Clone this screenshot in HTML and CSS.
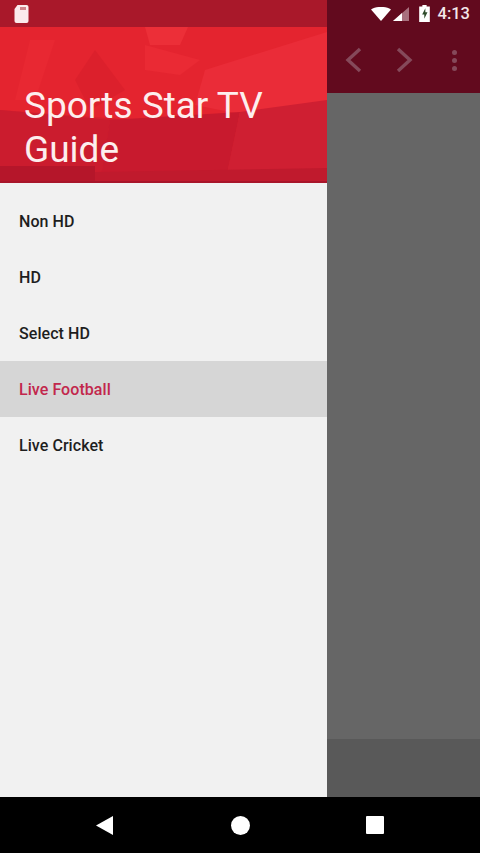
FILE: index.html
```html
<!DOCTYPE html>
<html lang="en">
<head>
    <meta charset="UTF-8">
    <title>Sports Star TV Guide</title>
    <link rel="stylesheet" href="styles.css">
</head>
<body>
<div class="screen">
    <div class="main">
        <div class="drawer">
            <div class="drawer-top">
                <svg class="texture" viewBox="0 0 327 183" preserveAspectRatio="none">
                    <rect width="327" height="183" fill="#d5202f"/>
                    <polygon points="0,0 327,0 327,110 200,125 0,110" fill="#e4242f"/>
                    <polygon points="145,27 188,27 180,45 150,45" fill="#ec2f38"/>
                    <polygon points="30,40 55,40 35,100 15,100" fill="#e82832"/>
                    <polygon points="95,50 125,90 90,110 75,80" fill="#dc202c"/>
                    <polygon points="205,70 327,32 327,105 270,120 195,105" fill="#ea2c38"/>
                    <polygon points="145,45 200,60 180,75 145,70" fill="#ea2a34"/>
                    <polygon points="0,110 110,120 100,183 0,183" fill="#cb1c2e"/>
                    <polygon points="110,120 240,112 225,183 100,183" fill="#c81a2e"/>
                    <polygon points="240,112 327,100 327,183 225,183" fill="#cf1f32"/>
                    <polygon points="0,166 95,166 95,183 0,183" fill="#b5162a"/>
                    <polygon points="95,172 327,168 327,183 95,183" fill="#c01a2d"/>
                    <rect y="181" width="327" height="2" fill="#a8152a"/>
                </svg>
                <div class="status-left">
                    <svg class="sd-icon" viewBox="0 0 14 18">
                        <path d="M3 0h9a2 2 0 0 1 2 2v14a2 2 0 0 1-2 2H2a2 2 0 0 1-2-2V4z" fill="#fbeaec"/>
                        <path d="M6 2h1v3H6zM8 2h1v3H8zM10 2h1v3h-1z" fill="#a81a2b"/>
                    </svg>
                </div>
                <div class="drawer-title">Sports Star TV Guide</div>
            </div>
            <ul class="menu">
                <li class="menu-item">Non HD</li>
                <li class="menu-item">HD</li>
                <li class="menu-item">Select HD</li>
                <li class="menu-item active">Live Football</li>
                <li class="menu-item">Live Cricket</li>
            </ul>
        </div>
        <div class="behind">
            <div class="appbar">
                <div class="status-right">
                    <svg class="wifi" viewBox="0 0 20 14"><path d="M0 2.500C5.500-1 14.500-1 20 2.500L10 14z" fill="#fff"/></svg>
                    <svg class="signal" viewBox="0 0 16 14">
                        <path d="M16 0v14H0z" fill="#a8707e"/>
                        <path d="M9 6v8H0z" fill="#fff"/>
                    </svg>
                    <svg class="battery" viewBox="0 0 10 16">
                        <path d="M3 0h4v1.500h3V16H0V1.500h3z" fill="#fff"/>
                        <path d="M5.800 3L2.800 9h2v4l3-6.200h-2z" fill="#2d4a2a"/>
                    </svg>
                    <span class="clock">4:13</span>
                </div>
                <div class="toolbar">
                    <svg class="chevron" viewBox="0 0 18 26"><path d="M15 2L3 13l12 11" fill="none" stroke="#85495a" stroke-width="3.400"/></svg>
                    <svg class="chevron next" viewBox="0 0 18 26"><path d="M3 2l12 11L3 24" fill="none" stroke="#85495a" stroke-width="3.400"/></svg>
                    <div class="dots"><span></span><span></span><span></span></div>
                </div>
            </div>
            <div class="content"></div>
            <div class="footer"></div>
        </div>
    </div>
    <div class="navbar">
        <svg class="nav-back" viewBox="0 0 17 19"><path d="M17 0v19L0 9.500z" fill="#fff"/></svg>
        <div class="nav-home"></div>
        <div class="nav-recent"></div>
    </div>
</div>
</body>
</html>
```

FILE: styles.css
```css
* {
    box-sizing: border-box;
}

html, body {
    margin: 0;
    padding: 0;
    background: #000;
}

.screen {
    width: 480px;
    height: 853px;
    display: flex;
    flex-direction: column;
    overflow: hidden;
    font-family: Roboto, "Liberation Sans", sans-serif;
}

.main {
    flex: 1;
    display: flex;
}

.drawer {
    width: 327px;
    display: flex;
    flex-direction: column;
    background-color: #f1f1f1;
}

.drawer-top {
    position: relative;
    height: 183px;
    padding: 0 24px 0;
    display: flex;
    flex-direction: column;
    background-color: #d5202f;
}

.texture {
    position: absolute;
    left: 0;
    top: 0;
    width: 100%;
    height: 100%;
}

.status-left {
    position: absolute;
    left: 0;
    top: 0;
    width: 100%;
    height: 27px;
    padding: 5px 0 0 14px;
    background-color: #a9182a;
}

.sd-icon {
    display: block;
    width: 15px;
    height: 18px;
}

.drawer-title {
    position: relative;
    margin-top: 84px;
    font-size: 37px;
    line-height: 44px;
    color: #fdeeee;
}

.menu {
    list-style: none;
    margin: 0;
    padding: 10px 0 0;
}

.menu-item {
    height: 56px;
    padding-left: 19px;
    display: flex;
    align-items: center;
    font-size: 16px;
    font-weight: 500;
    letter-spacing: 0.06px;
    color: #1e1e1e;
}

.menu-item.active {
    background-color: #d6d6d6;
    color: #c2274c;
}

.behind {
    flex: 1;
    display: flex;
    flex-direction: column;
}

.appbar {
    height: 93px;
    background-color: #620a1e;
}

.status-right {
    height: 27px;
    padding-right: 10px;
    display: flex;
    align-items: center;
    justify-content: flex-end;
}

.wifi {
    width: 20px;
    height: 14px;
    margin-right: 2px;
}

.signal {
    width: 16px;
    height: 14px;
    margin-right: 10px;
}

.battery {
    width: 11px;
    height: 17px;
    margin-right: 8px;
}

.clock {
    font-size: 16.500px;
    font-weight: 500;
    color: #f3e6e9;
}

.toolbar {
    height: 66px;
    display: flex;
    align-items: center;
}

.chevron {
    width: 18px;
    height: 26px;
    margin-left: 18px;
}

.chevron.next {
    margin-left: 32px;
}

.dots {
    margin-left: 39px;
    display: flex;
    flex-direction: column;
    gap: 3px;
}

.dots span {
    width: 5px;
    height: 5px;
    border-radius: 50%;
    background-color: #85495a;
}

.content {
    flex: 1;
    background-color: #666;
}

.footer {
    height: 58px;
    background-color: #595959;
}

.navbar {
    position: relative;
    height: 56px;
    flex-shrink: 0;
    background-color: #000;
    display: flex;
    align-items: center;
}

.nav-back {
    width: 17px;
    height: 19px;
    margin-left: 96px;
}

.nav-home {
    width: 19px;
    height: 19px;
    margin-left: 118px;
    border-radius: 50%;
    background-color: #fff;
}

.nav-recent {
    width: 18px;
    height: 18px;
    margin-left: 116px;
    border-radius: 1px;
    background-color: #fff;
}
```
